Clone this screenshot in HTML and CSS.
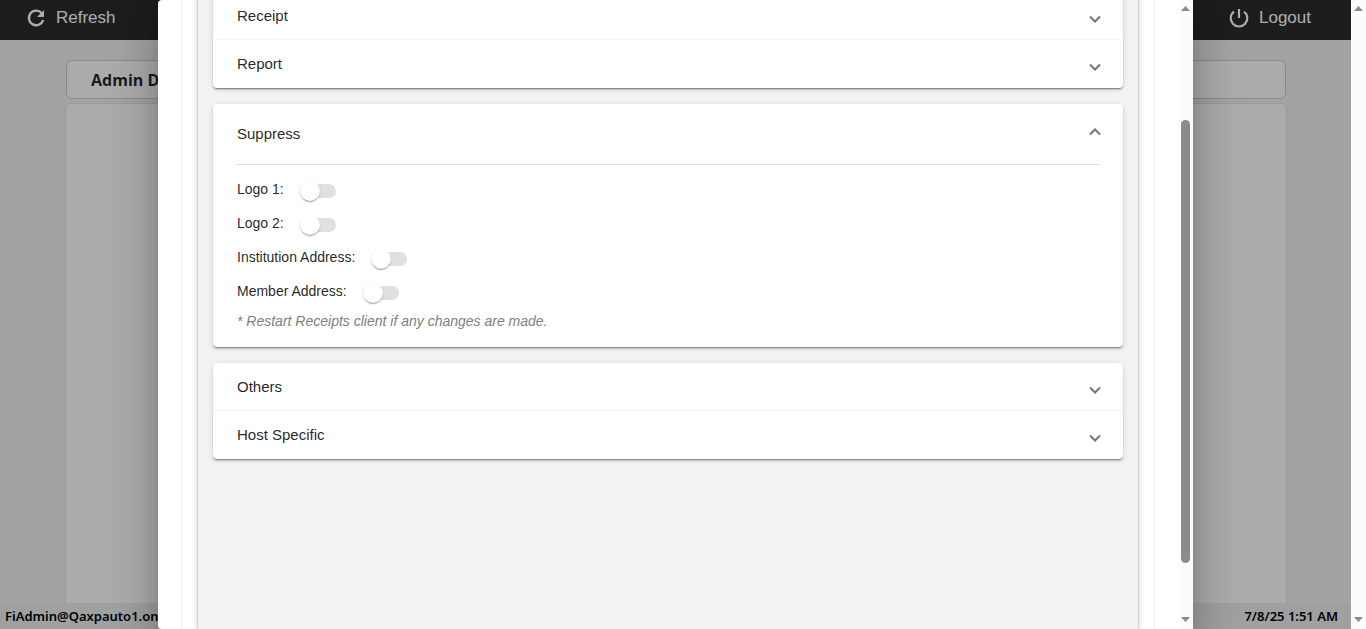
FILE: index.html
```html
<!DOCTYPE html>
<html lang="en">
<head>
    <meta charset="UTF-8">
    <meta name="viewport" content="width=device-width, initial-scale=1.0">
    <title>Admin Dashboard</title>
    <link rel="stylesheet" href="styles.css">
</head>
<body>
    <div class="page">
        <!-- Top bar -->
        <header class="navbar">
            <button type="button" class="nav-button">
                <svg width="20" height="20" viewBox="0 0 20 20" fill="none" stroke="currentColor" stroke-width="2.4">
                    <path d="M15.8 5.2A7.3 7.3 0 1 0 17.2 12"/>
                    <path d="M18 2v7h-7z" fill="currentColor" stroke="none"/>
                </svg>
                <span>Refresh</span>
            </button>
            <button type="button" class="nav-button">
                <svg width="20" height="20" viewBox="0 0 20 20" fill="none" stroke="currentColor" stroke-width="2.2">
                    <path d="M5 3.6a8.3 8.3 0 1 0 10 0"/>
                    <path d="M10 1v9"/>
                </svg>
                <span>Logout</span>
            </button>
        </header>

        <main class="content">
            <h1 class="title-box">Admin Dashboard</h1>
            <div class="content-card"></div>
        </main>

        <footer class="status-bar">
            <span>FiAdmin@Qaxpauto1.onmicrosoft.com</span>
            <span>7/8/25 1:51 AM</span>
        </footer>

        <!-- Settings dialog -->
        <div class="backdrop">
            <div class="dialog" role="dialog" aria-label="Settings">
                <div class="dialog-body">
                    <div class="tab-frame">
                        <div class="settings">
                            <section class="panel-group">
                                <button type="button" class="panel-header">
                                    <span>Receipt</span>
                                    <svg class="chevron" viewBox="0 0 12 24"><path d="M1 12.5l5 5 5-5"/></svg>
                                </button>
                                <button type="button" class="panel-header">
                                    <span>Report</span>
                                    <svg class="chevron" viewBox="0 0 12 24"><path d="M1 12.5l5 5 5-5"/></svg>
                                </button>
                            </section>

                            <section class="panel-group">
                                <button type="button" class="panel-header expanded" aria-expanded="true">
                                    <span>Suppress</span>
                                    <svg class="chevron" viewBox="0 0 12 24"><path d="M1 12.5l5-5 5 5"/></svg>
                                </button>
                                <div class="panel-body">
                                    <div class="option">
                                        <label for="logo1">Logo 1:</label>
                                        <input type="checkbox" class="toggle" id="logo1">
                                    </div>
                                    <div class="option">
                                        <label for="logo2">Logo 2:</label>
                                        <input type="checkbox" class="toggle" id="logo2">
                                    </div>
                                    <div class="option">
                                        <label for="institution">Institution Address:</label>
                                        <input type="checkbox" class="toggle" id="institution">
                                    </div>
                                    <div class="option">
                                        <label for="member">Member Address:</label>
                                        <input type="checkbox" class="toggle" id="member">
                                    </div>
                                    <p class="note">* Restart Receipts client if any changes are made.</p>
                                </div>
                            </section>

                            <section class="panel-group">
                                <button type="button" class="panel-header">
                                    <span>Others</span>
                                    <svg class="chevron" viewBox="0 0 12 24"><path d="M1 12.5l5 5 5-5"/></svg>
                                </button>
                                <button type="button" class="panel-header">
                                    <span>Host Specific</span>
                                    <svg class="chevron" viewBox="0 0 12 24"><path d="M1 12.5l5 5 5-5"/></svg>
                                </button>
                            </section>
                        </div>
                    </div>
                </div>
                <div class="scrollbar">
                    <svg class="arrow" viewBox="0 0 9 5"><path d="M0 5l4.5-5L9 5z"/></svg>
                    <div class="track">
                        <div class="thumb"></div>
                    </div>
                    <svg class="arrow" viewBox="0 0 9 5"><path d="M0 0l4.5 5L9 0z"/></svg>
                </div>
            </div>
        </div>
    </div>

    <div class="scrollbar">
        <svg class="arrow" viewBox="0 0 9 5"><path d="M0 5l4.5-5L9 5z"/></svg>
        <svg class="arrow" viewBox="0 0 9 5"><path d="M0 0l4.5 5L9 0z"/></svg>
    </div>
</body>
</html>
```
FILE: styles.css
```css
* {
    box-sizing: border-box;
}

body {
    display: flex;
    height: 100vh;
    margin: 0;
    overflow: hidden;
    font-family: Arial, "Liberation Sans", sans-serif;
    color: rgba(0, 0, 0, 0.87);
}

button {
    border: none;
    font-family: inherit;
    cursor: pointer;
}

.page {
    position: relative;
    flex: 1;
    display: flex;
    flex-direction: column;
    overflow: hidden;
    background: #f1f1f1;
}

/* Top bar */
.navbar {
    display: flex;
    justify-content: space-between;
    height: 40px;
    padding: 0 40px 4px 26px;
    background: #2c2c2c;
}

.nav-button {
    display: flex;
    align-items: center;
    gap: 10px;
    padding: 0;
    background: none;
    color: #fff;
    font-size: 17px;
}

/* Page content behind the dialog */
.content {
    flex: 1;
    display: flex;
    flex-direction: column;
    gap: 5px;
    padding: 20px 65px 0 66px;
}

.title-box {
    height: 39px;
    margin: 0;
    padding: 0 24px;
    border: 1px solid #ccc;
    border-radius: 5px;
    background: #fdfdfd;
    font-family: "Open Sans", sans-serif;
    font-size: 16px;
    font-weight: 700;
    line-height: 38px;
}

.content-card {
    flex: 1;
    border-radius: 4px 4px 0 0;
    background: #fdfdfd;
    box-shadow: 0 0 2px rgba(0, 0, 0, 0.2);
}

.status-bar {
    position: relative;
    display: flex;
    justify-content: space-between;
    height: 26px;
    padding: 0 13px 0 5px;
    background: #eaedee;
    color: #000;
    font-family: "Noto Sans", sans-serif;
    font-size: 13px;
    font-weight: 600;
    line-height: 26px;
}

/* Dialog */
.backdrop {
    position: absolute;
    inset: 0;
    display: flex;
    padding: 0 158px;
    background: rgba(0, 0, 0, 0.32);
}

.dialog {
    flex: 1;
    display: flex;
    overflow: hidden;
    border-radius: 4px 0 0 4px;
    background: #fff;
    box-shadow: 0 11px 15px -7px rgba(0, 0, 0, 0.2),
        0 24px 38px 3px rgba(0, 0, 0, 0.14),
        0 9px 46px 8px rgba(0, 0, 0, 0.12);
}

.dialog-body {
    flex: 1;
    display: flex;
    padding: 0 23px;
    overflow: hidden;
}

.tab-frame {
    flex: 1;
    display: flex;
    padding: 0 16px;
    border: solid #f0f0f0;
    border-width: 0 1px;
    overflow: hidden;
}

.settings {
    flex: 1;
    display: flex;
    flex-direction: column;
    gap: 16px;
    margin-top: -8px;
    padding: 0 15px;
    background: #f2f2f2;
    box-shadow: 0 3px 1px -2px rgba(0, 0, 0, 0.2),
        0 2px 2px rgba(0, 0, 0, 0.14),
        0 1px 5px rgba(0, 0, 0, 0.3);
}

/* Expansion panels */
.panel-group {
    border-radius: 4px;
    background: #fff;
    box-shadow: 0 3px 1px -2px rgba(0, 0, 0, 0.2),
        0 2px 2px rgba(0, 0, 0, 0.14),
        0 1px 5px rgba(0, 0, 0, 0.12),
        0 1px 1px rgba(0, 0, 0, 0.15);
}

.panel-header {
    display: flex;
    align-items: center;
    justify-content: space-between;
    width: 100%;
    height: 48px;
    padding: 0 22px 0 24px;
    background: none;
    color: inherit;
    font-size: 15px;
}

.panel-header span {
    padding-bottom: 2px;
}

.panel-header + .panel-header {
    box-shadow: 0 -1px 1px rgba(0, 0, 0, 0.04);
}

.panel-header.expanded {
    height: 60px;
}

.chevron {
    width: 12px;
    height: 24px;
    fill: none;
    stroke: #757575;
    stroke-width: 2;
}

.panel-body {
    margin: 0 24px;
    padding: 7px 0 13px;
    border-top: 1px solid #e0e0e0;
    font-size: 14px;
}

.option {
    display: flex;
    align-items: center;
    gap: 16px;
    height: 34px;
}

/* Slide toggle: the bar is the box, the knob is ::before */
.toggle {
    position: relative;
    appearance: none;
    width: 36px;
    height: 14px;
    margin: 4px 0 0;
    border-radius: 8px;
    background: #e0e0e0;
    cursor: pointer;
}

.toggle::before {
    content: "";
    position: absolute;
    top: -3px;
    left: 0;
    width: 20px;
    height: 20px;
    border-radius: 50%;
    background: #fff;
    box-shadow: 0 2px 1px -1px rgba(0, 0, 0, 0.2),
        0 1px 1px rgba(0, 0, 0, 0.14),
        0 1px 3px rgba(0, 0, 0, 0.12);
}

.toggle:checked::before {
    left: 16px;
}

.note {
    margin: 0;
    color: #808080;
    font-style: italic;
    line-height: 26px;
}

/* Scrollbars */
.scrollbar {
    display: flex;
    flex-direction: column;
    align-items: center;
    justify-content: space-between;
    width: 15px;
    padding: 6px 0 7px;
    background: #fcfcfc;
}

.arrow {
    width: 9px;
    height: 5px;
    fill: #8b8b8b;
}

.track {
    flex: 1;
    display: flex;
    flex-direction: column;
    width: 9px;
}

.track::before {
    content: "";
    flex: 109;
}

.thumb {
    flex: 443;
    border-radius: 5px;
    background: #8b8b8b;
}

.track::after {
    content: "";
    flex: 54;
}
```
